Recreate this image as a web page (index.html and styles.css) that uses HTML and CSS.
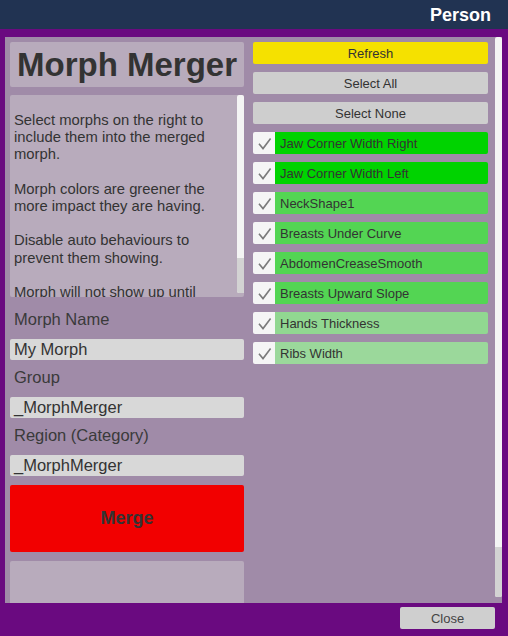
FILE: index.html
```html
<!DOCTYPE html>
<html>
<head>
<meta charset="utf-8">
<link rel="stylesheet" href="styles.css">
</head>
<body>
<div class="window">
  <div class="header"><span class="title">Person</span></div>
  <div class="frame">
    <div class="panel">
      <div class="left">
        <div class="title-box">Morph Merger</div>
        <div class="desc">
          <div class="desc-text">
            <p>Select morphs on the right to include them into the merged morph.</p>
            <p>Morph colors are greener the more impact they are having.</p>
            <p>Disable auto behaviours to prevent them showing.</p>
            <p>Morph will not show up until</p>
          </div>
          <div class="vscroll small"><div class="thumb"></div></div>
        </div>
        <div class="label first">Morph Name</div>
        <div class="input">My Morph</div>
        <div class="label">Group</div>
        <div class="input">_MorphMerger</div>
        <div class="label">Region (Category)</div>
        <div class="input">_MorphMerger</div>
        <div class="merge">Merge</div>
        <div class="extra"></div>
      </div>
      <div class="right">
        <div class="btn yellow">Refresh</div>
        <div class="btn">Select All</div>
        <div class="btn">Select None</div>
        <div class="item g1"><span class="check"><svg width="22" height="22" viewBox="0 0 22 22"><path d="M6 11.7 L10 16.6 L17.6 6.6" fill="none" stroke="#7b7b7b" stroke-width="1.6"/></svg></span><span class="name">Jaw Corner Width Right</span></div>
        <div class="item g1"><span class="check"><svg width="22" height="22" viewBox="0 0 22 22"><path d="M6 11.7 L10 16.6 L17.6 6.6" fill="none" stroke="#7b7b7b" stroke-width="1.6"/></svg></span><span class="name">Jaw Corner Width Left</span></div>
        <div class="item g2"><span class="check"><svg width="22" height="22" viewBox="0 0 22 22"><path d="M6 11.7 L10 16.6 L17.6 6.6" fill="none" stroke="#7b7b7b" stroke-width="1.6"/></svg></span><span class="name">NeckShape1</span></div>
        <div class="item g2"><span class="check"><svg width="22" height="22" viewBox="0 0 22 22"><path d="M6 11.7 L10 16.6 L17.6 6.6" fill="none" stroke="#7b7b7b" stroke-width="1.6"/></svg></span><span class="name">Breasts Under Curve</span></div>
        <div class="item g2"><span class="check"><svg width="22" height="22" viewBox="0 0 22 22"><path d="M6 11.7 L10 16.6 L17.6 6.6" fill="none" stroke="#7b7b7b" stroke-width="1.6"/></svg></span><span class="name">AbdomenCreaseSmooth</span></div>
        <div class="item g2"><span class="check"><svg width="22" height="22" viewBox="0 0 22 22"><path d="M6 11.7 L10 16.6 L17.6 6.6" fill="none" stroke="#7b7b7b" stroke-width="1.6"/></svg></span><span class="name">Breasts Upward Slope</span></div>
        <div class="item g3"><span class="check"><svg width="22" height="22" viewBox="0 0 22 22"><path d="M6 11.7 L10 16.6 L17.6 6.6" fill="none" stroke="#7b7b7b" stroke-width="1.6"/></svg></span><span class="name">Hands Thickness</span></div>
        <div class="item g4"><span class="check"><svg width="22" height="22" viewBox="0 0 22 22"><path d="M6 11.7 L10 16.6 L17.6 6.6" fill="none" stroke="#7b7b7b" stroke-width="1.6"/></svg></span><span class="name">Ribs Width</span></div>
      </div>
      <div class="vscroll main"><div class="thumb"></div></div>
    </div>
    <div class="footer">
      <div class="close">Close</div>
    </div>
  </div>
</div>
</body>
</html>
```
FILE: styles.css
```css
* { box-sizing: border-box; }
html, body { margin: 0; padding: 0; }
body {
  width: 508px;
  height: 636px;
  overflow: hidden;
  font-family: "Liberation Sans", Arial, sans-serif;
  color: #333;
  background: #6a0a80;
}
.window { width: 508px; height: 636px; display: flex; flex-direction: column; }
.header {
  height: 29px;
  background: #213352;
  display: flex;
  align-items: center;
  justify-content: flex-end;
  padding-right: 17px;
}
.header .title { color: #fff; font-weight: bold; font-size: 18px; line-height: 20px; }
.frame {
  flex: 1;
  background: #6a0a80;
  padding-top: 8px;
  display: flex;
  flex-direction: column;
}
.panel {
  height: 566px;
  margin: 0 6px 0 5px;
  background: #a08ba8;
  display: flex;
  padding: 5px 0 0 5px;
  overflow: hidden;
}
.left {
  width: 234px;
  display: flex;
  flex-direction: column;
  flex-shrink: 0;
}
.right {
  width: 235px;
  margin-left: 9px;
  display: flex;
  flex-direction: column;
  gap: 8px;
  flex-shrink: 0;
}
.title-box {
  height: 45px;
  background: #b8abbc;
  border-radius: 2px;
  font-weight: bold;
  font-size: 33px;
  line-height: 45px;
  text-align: center;
  color: #333;
  flex-shrink: 0;
}
.desc {
  margin-top: 8px;
  height: 202px;
  background: #b8abbc;
  border-radius: 2px;
  display: flex;
  overflow: hidden;
  flex-shrink: 0;
}
.desc-text {
  flex: 1;
  padding: 17px 18px 0 4px;
  font-size: 14.8px;
  line-height: 17.2px;
  color: #333;
}
.desc-text p { margin: 0 0 17.2px 0; }
.desc-text p:last-child { margin-bottom: 0; }
.vscroll {
  background: #f4f4f4;
  border-radius: 2px;
  display: flex;
  flex-direction: column;
  justify-content: flex-end;
  flex-shrink: 0;
}
.vscroll .thumb { background: #d3d3d3; border-radius: 0 0 2px 2px; }
.vscroll.small { width: 8px; margin-right: -1px; margin-bottom: 4px; }
.vscroll.small .thumb { height: 35px; }
.vscroll.main { width: 7px; margin-left: 7px; margin-top: -5px; height: 560px; }
.vscroll.main .thumb { height: 50px; }
.label {
  font-size: 16.5px;
  line-height: 20px;
  padding: 7px 0 10px 4px;
  color: #3a3a3a;
}
.label.first { margin-top: 5px; }
.input {
  height: 21px;
  background: #d8d8d8;
  border-radius: 2px;
  font-size: 16.5px;
  line-height: 21px;
  padding-left: 4px;
  color: #333;
  flex-shrink: 0;
}
.merge {
  margin-top: 9px;
  height: 67px;
  background: #f20000;
  border-radius: 2px;
  font-weight: bold;
  font-size: 18px;
  color: #333;
  display: flex;
  align-items: center;
  justify-content: center;
  flex-shrink: 0;
}
.extra {
  margin-top: 9px;
  height: 80px;
  background: #b8abbc;
  border-radius: 2px;
  flex-shrink: 0;
}
.btn {
  height: 22px;
  background: #cecece;
  border-radius: 2px;
  font-size: 13px;
  line-height: 22px;
  padding-top: 1px;
  text-align: center;
  color: #333;
}
.btn.yellow { background: #f5e100; }
.item {
  height: 22px;
  display: flex;
  border-radius: 2px;
  overflow: hidden;
}
.check {
  width: 22px;
  height: 22px;
  background: #f5f5f5;
  display: block;
  flex-shrink: 0;
}
.check svg { display: block; }
.name {
  flex: 1;
  font-size: 13px;
  line-height: 22px;
  padding-left: 5px;
  padding-top: 1px;
  color: #333;
}
.g1 .name { background: #00d300; }
.g2 .name { background: #53d553; }
.g3 .name { background: #91d791; }
.g4 .name { background: #9bd89b; }
.footer {
  flex: 1;
  display: flex;
  justify-content: flex-end;
  align-items: flex-start;
  padding: 4px 13px 0 0;
}
.close {
  width: 95px;
  height: 22px;
  background: #cfcfcf;
  border-radius: 2px;
  font-size: 13px;
  line-height: 22px;
  padding-top: 1px;
  text-align: center;
  color: #444;
}
```
